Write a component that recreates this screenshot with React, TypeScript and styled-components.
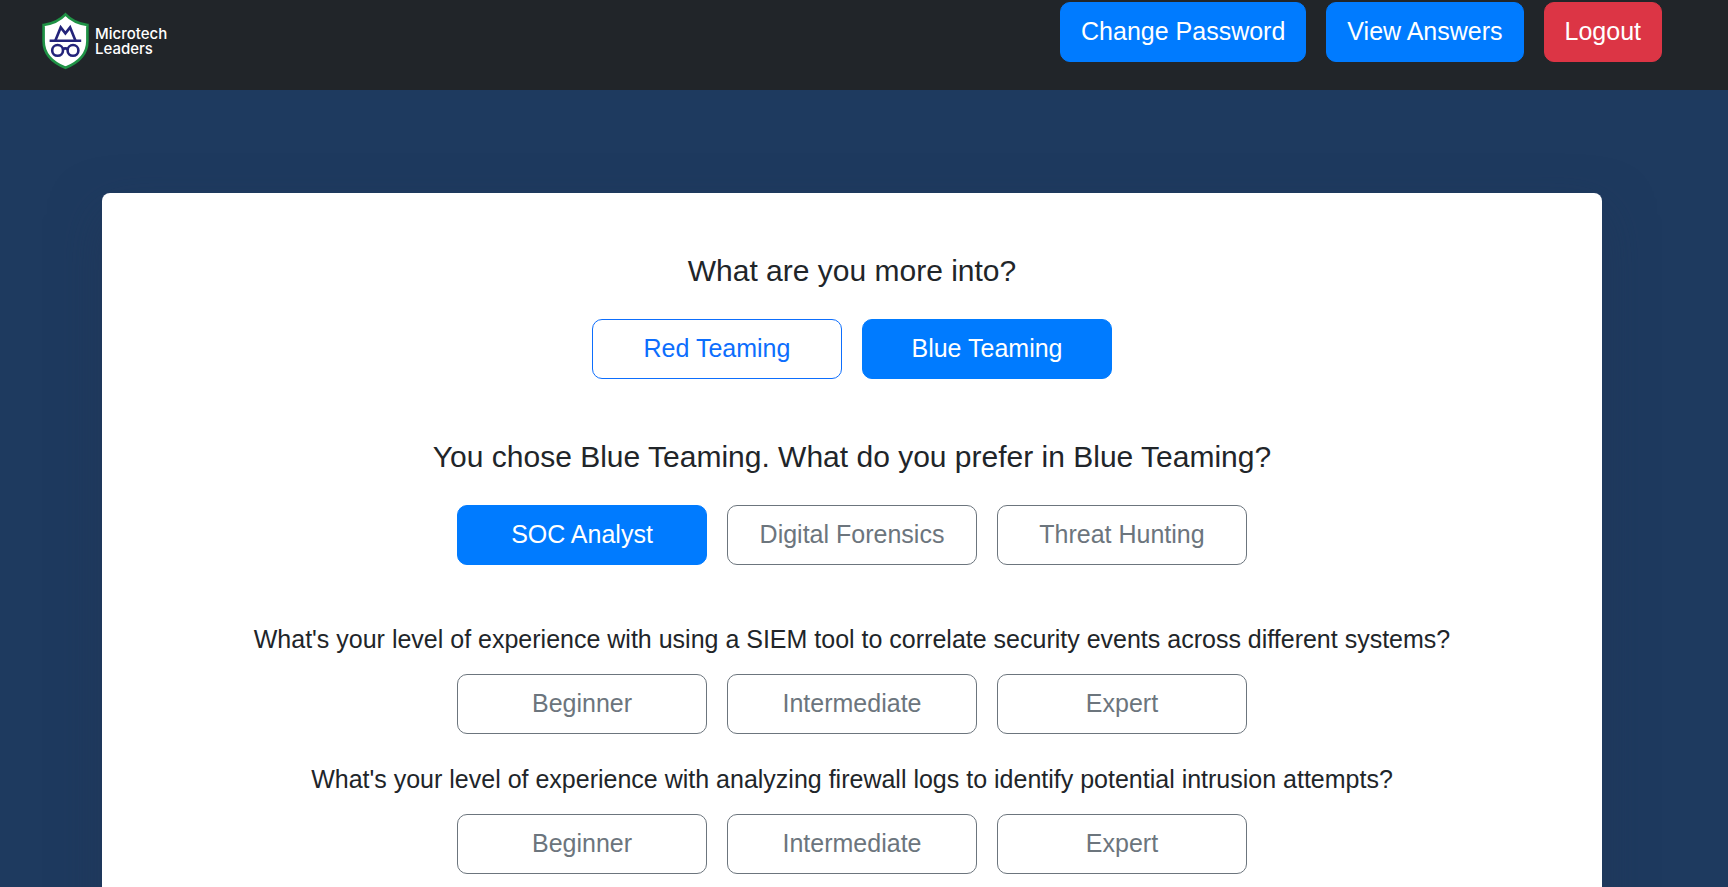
import React, { useState } from "react";
import styled, { createGlobalStyle } from "styled-components";

const GlobalStyle = createGlobalStyle`
  *, *::before, *::after {
    box-sizing: border-box;
  }
  body {
    margin: 0;
    background: #1e3a5f;
    color: #212529;
    font-family: "Liberation Sans", Arial, sans-serif;
  }
`;

const Page = styled.div`
  height: 100vh;
  overflow: hidden;
`;

const Header = styled.header`
  display: flex;
  align-items: flex-start;
  justify-content: space-between;
  height: 90px;
  padding: 2px 66px 0 42px;
  background: #212529;
`;

const Brand = styled.a`
  display: flex;
  align-items: center;
  gap: 6px;
  margin-top: 10px;
  color: #ffffff;
  text-decoration: none;
`;

const Shield = styled.svg`
  display: block;
  width: 47px;
  height: 58px;
`;

const BrandName = styled.span`
  display: block;
  width: min-content;
  font: 500 15px/15px Inter, sans-serif;
`;

const Actions = styled.nav`
  display: flex;
  gap: 20px;
`;

type Tone = "primary" | "danger" | "outlinePrimary" | "outlineSecondary";

const tones: Record<Tone, { text: string; fill: string; line: string }> = {
  primary: { text: "#ffffff", fill: "#007bff", line: "#007bff" },
  danger: { text: "#ffffff", fill: "#dc3545", line: "#dc3545" },
  outlinePrimary: { text: "#0d6efd", fill: "transparent", line: "#0d6efd" },
  outlineSecondary: { text: "#6c757d", fill: "transparent", line: "#6c757d" },
};

const Button = styled.button<{ $tone: Tone }>`
  height: 60px;
  padding: 0 20px 2px;
  border: 1px solid ${({ $tone }) => tones[$tone].line};
  border-radius: 10px;
  background: ${({ $tone }) => tones[$tone].fill};
  color: ${({ $tone }) => tones[$tone].text};
  font: 25px/38px "Liberation Sans", Arial, sans-serif;
  white-space: nowrap;
  cursor: pointer;
`;

const Choice = styled(Button)`
  width: 250px;
`;

const Main = styled.main`
  padding: 103px 126px 0 102px;
`;

const Card = styled.section`
  padding: 60px;
  border-radius: 8px;
  background: #ffffff;
  box-shadow: 0 20px 50px rgba(36, 54, 86, 0.5);
  text-align: center;
`;

const Topic = styled.section`
  margin-bottom: 60px;
`;

const TopicTitle = styled.h2`
  margin: 0 0 30px;
  font-size: 30px;
  font-weight: 400;
  line-height: 36px;
`;

const Skill = styled.section`
  margin-bottom: 31px;
`;

const SkillTitle = styled.h3`
  margin: 0 0 20px;
  font-size: 25px;
  font-weight: 400;
  line-height: 29px;
`;

const Choices = styled.div`
  display: flex;
  flex-wrap: wrap;
  justify-content: center;
  gap: 20px;
`;

const teams = ["Red Teaming", "Blue Teaming"];
const fields = ["SOC Analyst", "Digital Forensics", "Threat Hunting"];
const levels = ["Beginner", "Intermediate", "Expert"];
const skills = [
  "What's your level of experience with using a SIEM tool to correlate security events across different systems?",
  "What's your level of experience with analyzing firewall logs to identify potential intrusion attempts?",
];

interface ChoiceGroupProps {
  label: string;
  options: string[];
  selected?: string;
  idle: Tone;
  onSelect: (option: string) => void;
}

function ChoiceGroup({ label, options, selected, idle, onSelect }: ChoiceGroupProps) {
  return (
    <Choices role="group" aria-label={label}>
      {options.map((option) => (
        <Choice
          key={option}
          type="button"
          $tone={option === selected ? "primary" : idle}
          aria-pressed={option === selected}
          onClick={() => onSelect(option)}
        >
          {option}
        </Choice>
      ))}
    </Choices>
  );
}

function ShieldLogo() {
  return (
    <Shield viewBox="0 0 47 58" fill="none" aria-hidden="true">
      <path
        d="M23.5 2.4C18.5 7.8 10.5 11.8 1.6 13V29C1.6 42 10.5 50.5 23.5 55.8C36.5 50.5 45.4 42 45.4 29V13C36.5 11.8 28.5 7.8 23.5 2.4Z"
        fill="#ffffff"
        stroke="#1f9245"
        strokeWidth="2.6"
      />
      <g stroke="#23237a" strokeWidth="2.6">
        <path d="M7.6 28.8H39.2" />
        <path d="M13.4 28.4L18.7 15.4L23.4 21.4L28.1 15.4L33.4 28.4" strokeLinejoin="miter" strokeMiterlimit="3" />
        <circle cx="15.6" cy="38.4" r="5.4" />
        <circle cx="31" cy="38.4" r="5.4" />
        <path d="M20.4 37.2Q23.3 35.6 26.2 37.2" />
      </g>
    </Shield>
  );
}

export default function App() {
  const [team, setTeam] = useState("Blue Teaming");
  const [field, setField] = useState("SOC Analyst");
  const [answers, setAnswers] = useState<Record<string, string>>({});

  return (
    <Page>
      <GlobalStyle />
      <Header>
        <Brand href="#">
          <ShieldLogo />
          <BrandName>Microtech Leaders</BrandName>
        </Brand>
        <Actions>
          <Button type="button" $tone="primary">Change Password</Button>
          <Button type="button" $tone="primary">View Answers</Button>
          <Button type="button" $tone="danger">Logout</Button>
        </Actions>
      </Header>
      <Main>
        <Card>
          <Topic>
            <TopicTitle>What are you more into?</TopicTitle>
            <ChoiceGroup label="Team" options={teams} selected={team} idle="outlinePrimary" onSelect={setTeam} />
          </Topic>
          <Topic>
            <TopicTitle>You chose {team}. What do you prefer in {team}?</TopicTitle>
            <ChoiceGroup label="Field" options={fields} selected={field} idle="outlineSecondary" onSelect={setField} />
          </Topic>
          {skills.map((skill) => (
            <Skill key={skill}>
              <SkillTitle>{skill}</SkillTitle>
              <ChoiceGroup
                label={skill}
                options={levels}
                selected={answers[skill]}
                idle="outlineSecondary"
                onSelect={(level) => setAnswers({ ...answers, [skill]: level })}
              />
            </Skill>
          ))}
        </Card>
      </Main>
    </Page>
  );
}
